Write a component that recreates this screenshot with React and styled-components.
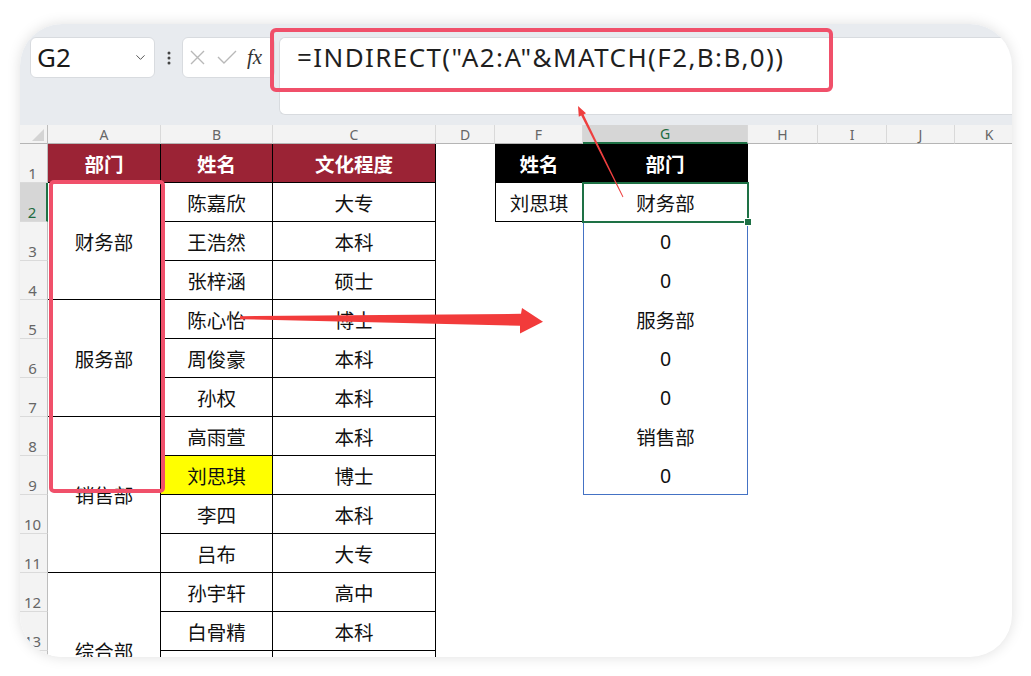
import styled, { createGlobalStyle } from "styled-components";
import { ChevronDown } from "lucide-react";

const GlobalStyle = createGlobalStyle`
  html, body {
    margin: 0;
    padding: 0;
    background: #ffffff;
  }
  body {
    font-family: "Noto Sans", "Noto Sans CJK SC", sans-serif;
  }
`;

const people = [
  ["陈嘉欣", "大专"],
  ["王浩然", "本科"],
  ["张梓涵", "硕士"],
  ["陈心怡", "博士"],
  ["周俊豪", "本科"],
  ["孙权", "本科"],
  ["高雨萱", "本科"],
  ["刘思琪", "博士"],
  ["李四", "本科"],
  ["吕布", "大专"],
  ["孙宇轩", "高中"],
  ["白骨精", "本科"],
  ["", ""],
  ["", ""],
];

const depts = [
  { name: "财务部", start: 2, span: 3 },
  { name: "服务部", start: 5, span: 3 },
  { name: "销售部", start: 8, span: 4 },
  { name: "综合部", start: 12, span: 4 },
];

const spill = ["财务部", "0", "0", "服务部", "0", "0", "销售部", "0"];

const columns = ["A", "B", "C", "D", "F", "G", "H", "I", "J", "K"];

export default function App() {
  return (
    <Page>
      <GlobalStyle />
      <Card>
        <FormulaBar>
          <NameBox>
            <span>G2</span>
            <ChevronDown size={15} strokeWidth={1.6} color="#555" />
          </NameBox>
          <Dots>
            <svg width="4" height="14" viewBox="0 0 4 14">
              <circle cx="2" cy="2" r="1.5" fill="#444" />
              <circle cx="2" cy="7" r="1.5" fill="#444" />
              <circle cx="2" cy="12" r="1.5" fill="#444" />
            </svg>
          </Dots>
          <FuncBox>
            <svg width="15" height="15" viewBox="0 0 15 15">
              <path d="M1 1 L14 14 M14 1 L1 14" stroke="#b8b8b8" strokeWidth="1.4" fill="none" />
            </svg>
            <svg width="20" height="15" viewBox="0 0 20 15">
              <path d="M1 7 L7 13 L19 1" stroke="#b8b8b8" strokeWidth="1.4" fill="none" />
            </svg>
            <Fx>fx</Fx>
          </FuncBox>
          <FormulaInput>{'=INDIRECT("A2:A"&MATCH(F2,B:B,0))'}</FormulaInput>
          <FormulaMark />
        </FormulaBar>

        <Sheet>
          <Corner />
          {columns.map((c, i) => (
            <ColHead key={c} $col={i + 2} $active={c === "G"}>
              {c}
            </ColHead>
          ))}
          {Array.from({ length: 15 }, (_, i) => (
            <RowHead key={i} $row={i + 2} $active={i === 1}>
              {i + 1}
            </RowHead>
          ))}

          <HeadCell $col={2} $row={2} $tone="red">部门</HeadCell>
          <HeadCell $col={3} $row={2} $tone="red">姓名</HeadCell>
          <HeadCell $col={4} $row={2} $tone="red">文化程度</HeadCell>

          {depts.map((d) => (
            <Cell key={d.name} $col={2} $row={d.start + 1} $span={d.span}>
              {d.name}
            </Cell>
          ))}
          {people.map(([name], i) => (
            <Cell key={"b" + i} $col={3} $row={i + 3} $bg={name === "刘思琪" ? "#ffff00" : undefined}>
              {name}
            </Cell>
          ))}
          {people.map(([, edu], i) => (
            <Cell key={"c" + i} $col={4} $row={i + 3}>
              {edu}
            </Cell>
          ))}

          <HeadCell $col={6} $row={2} $tone="black" $left>姓名</HeadCell>
          <HeadCell $col={7} $row={2} $tone="black">部门</HeadCell>
          <Cell $col={6} $row={3} $left>刘思琪</Cell>

          {spill.map((v, i) => (
            <SpillCell key={"g" + i} $row={i + 3}>
              {v}
            </SpillCell>
          ))}
          <SpillFrame />
          <Selection>
            <FillHandle />
          </Selection>
          <MarkFrame />
        </Sheet>

        <Arrows viewBox="20 24 992 633">
          <polygon
            points="240,316.2 521,313.8 522,308 543,321.8 520,333.5 520,325.8 240,319.2"
            fill="#f23b3b"
          />
          <polygon
            points="578,106 586,113.2 583.6,114.4 623.4,196.8 622.6,197.2 581.2,115.6 578.8,116.8"
            fill="#ee3f3f"
          />
        </Arrows>
      </Card>
    </Page>
  );
}

const Page = styled.div`
  width: 1031px;
  height: 676px;
  box-sizing: border-box;
  padding: 24px 0 0 20px;
  overflow: hidden;
`;

const Card = styled.div`
  position: relative;
  width: 992px;
  height: 633px;
  border-radius: 42px;
  overflow: hidden;
  background: #ffffff;
  box-shadow: 0 0 14px rgba(0, 0, 0, 0.13);
  display: flex;
  flex-direction: column;
`;

const FormulaBar = styled.div`
  position: relative;
  flex-shrink: 0;
  display: flex;
  align-items: flex-start;
  padding: 13px 0 10px 10px;
  background: #e8ebef;
`;

const NameBox = styled.div`
  width: 125px;
  height: 41px;
  box-sizing: border-box;
  display: flex;
  align-items: center;
  justify-content: space-between;
  padding: 0 6px 0 6px;
  background: #ffffff;
  border: 1px solid #d8dbdf;
  border-radius: 6px;
  font-size: 26px;
  line-height: 41px;
  color: #1a1a1a;
`;

const Dots = styled.div`
  width: 27px;
  height: 41px;
  display: flex;
  align-items: center;
  justify-content: center;
`;

const FuncBox = styled.div`
  width: 93px;
  height: 41px;
  box-sizing: border-box;
  display: flex;
  align-items: center;
  gap: 12px;
  padding-left: 7px;
  background: #ffffff;
  border: 1px solid #d8dbdf;
  border-radius: 6px;
`;

const Fx = styled.span`
  font-family: "Liberation Serif", serif;
  font-style: italic;
  font-size: 21px;
  color: #333333;
  margin-left: -2px;
`;

const FormulaInput = styled.div`
  flex: 1;
  height: 78px;
  box-sizing: border-box;
  margin-left: 4px;
  padding: 2px 0 0 17px;
  background: #ffffff;
  border: 1px solid #d8dbdf;
  border-right: none;
  border-radius: 6px 0 0 6px;
  font-size: 26px;
  letter-spacing: 1.4px;
  line-height: 35px;
  color: #1f1f1f;
  white-space: nowrap;
`;

const FormulaMark = styled.div`
  position: absolute;
  left: 250px;
  top: 4px;
  width: 563px;
  height: 64px;
  box-sizing: border-box;
  border: 4px solid #f0506a;
  border-radius: 6px;
  pointer-events: none;
`;

const Sheet = styled.div`
  flex-shrink: 0;
  display: grid;
  grid-template-columns: 28px 113px 112px 163px 59px 88px 165px 70px 69px 68px 69px;
  grid-template-rows: 19px repeat(15, 39px);
  font-family: "Noto Sans", "Noto Sans CJK SC", sans-serif;
`;

const Corner = styled.div`
  grid-column: 1;
  grid-row: 1;
  position: relative;
  background: #f3f3f3;
  border-right: 1px solid #bdbdbd;
  border-bottom: 1px solid #b5b5b5;

  &::after {
    content: "";
    position: absolute;
    right: 3px;
    bottom: 2px;
    border-left: 12px solid transparent;
    border-bottom: 12px solid #d4d4d4;
  }
`;

const ColHead = styled.div`
  grid-column: ${(p) => p.$col};
  grid-row: 1;
  display: flex;
  align-items: center;
  justify-content: center;
  background: ${(p) => (p.$active ? "#d6d6d6" : "#f3f3f3")};
  border-right: 1px solid #d9d9d9;
  border-bottom: ${(p) => (p.$active ? "2px solid #1e7145" : "1px solid #b5b5b5")};
  font-size: 14px;
  color: ${(p) => (p.$active ? "#1e6b41" : "#666666")};
`;

const RowHead = styled.div`
  grid-column: 1;
  grid-row: ${(p) => p.$row};
  display: flex;
  align-items: flex-end;
  justify-content: center;
  padding: 0 2px 1px 0;
  background: ${(p) => (p.$active ? "#d6d6d6" : "#f3f3f3")};
  border-right: ${(p) => (p.$active ? "2px solid #1e7145" : "1px solid #bdbdbd")};
  border-bottom: 1px solid #dadada;
  font-size: 15px;
  line-height: 16px;
  color: ${(p) => (p.$active ? "#1e6b41" : "#666666")};
`;

const Cell = styled.div`
  grid-column: ${(p) => p.$col};
  grid-row: ${(p) => p.$row} / span ${(p) => p.$span || 1};
  display: flex;
  align-items: center;
  justify-content: center;
  background: ${(p) => p.$bg || "#ffffff"};
  border-right: 1px solid #000000;
  border-bottom: 1px solid #000000;
  border-left: ${(p) => (p.$left ? "1px solid #000000" : "none")};
  font-size: 19.5px;
  color: #111111;
`;

const HeadCell = styled(Cell)`
  background: ${(p) => (p.$tone === "red" ? "#9b2335" : "#000000")};
  color: #ffffff;
  font-weight: 700;
`;

const SpillCell = styled.div`
  grid-column: 7;
  grid-row: ${(p) => p.$row};
  display: flex;
  align-items: center;
  justify-content: center;
  font-size: 19.5px;
  color: #111111;
`;

const SpillFrame = styled.div`
  grid-column: 7;
  grid-row: 3 / span 8;
  border: 1px solid #4472c4;
  border-top: none;
  pointer-events: none;
`;

const Selection = styled.div`
  grid-column: 7;
  grid-row: 3;
  position: relative;
  margin: -1px;
  border: 2px solid #1e7145;
  pointer-events: none;
`;

const FillHandle = styled.div`
  position: absolute;
  right: -5px;
  bottom: -5px;
  width: 6px;
  height: 6px;
  background: #1e7145;
  border: 1px solid #ffffff;
`;

const MarkFrame = styled.div`
  grid-column: 2;
  grid-row: 3 / span 8;
  margin: -3px -4px 2px 1px;
  border: 4px solid #f0506a;
  border-radius: 5px;
  pointer-events: none;
`;

const Arrows = styled.svg`
  position: absolute;
  left: 0;
  top: 0;
  width: 992px;
  height: 633px;
  pointer-events: none;
`;
